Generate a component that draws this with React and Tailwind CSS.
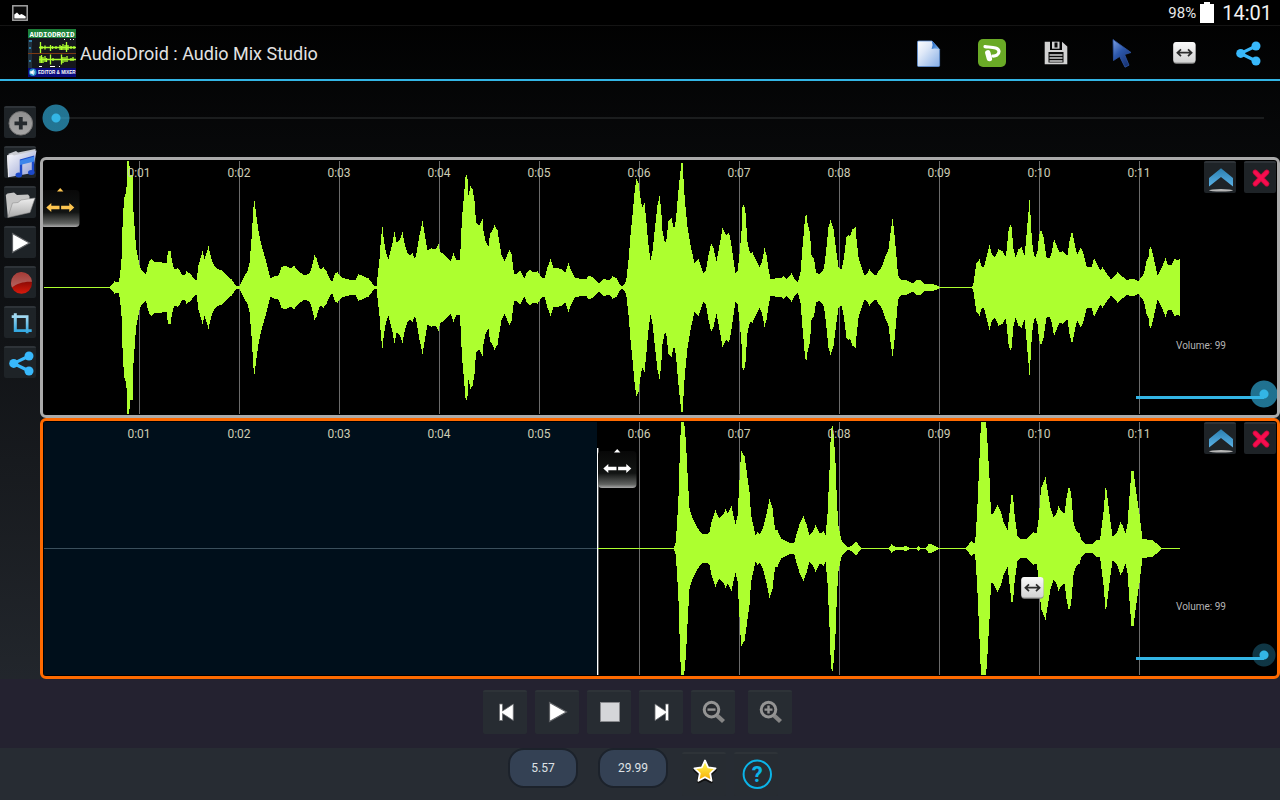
import React, { useState } from "react";

const LIME = "#adff2f";
const SECOND = 100;
const ORIGIN = 43;

/* Envelope points: x position and half height of the wave, in pairs. */
const VOICE = [
  44,.5,110,.5,112,3,114.5,6,118.5,5,120,12,121.5,28,122.5,60,124,89,125.5,93,126.5,100,127.5,126,128.5,126,129.5,121,130.5,112,132.5,112,133.5,75,135,55,136,40,137.5,32,139.5,22,140.5,19,143.5,15,146,13,147.5,20,149.5,26,151.5,28,155,25,161.5,25,166.5,24,168,36,170.5,36,172,26,174,18,177.5,19,179,18,181.5,13,185,12,186.5,16,190,14,194.5,8,196.5,7,198.5,22,202.5,36,204.5,28,208.5,41,210.5,32,213,24,216.5,19,221.5,17,226.5,12,231.5,8,235,3,237,1,239.5,1,241.5,5,245,13,247.5,16,249.5,24,251.5,48,253.5,80,254.5,86,255.5,78,258.5,56,261.5,42,265,30,268.5,16,270.5,9,274,11,278.5,12,281.5,20,285,22,288.5,20,291.5,19,294,22,296.5,18,300,15,305,12,309.5,14,311.5,19,314.5,32,316.5,29,320,18,323.5,20,326.5,16,330,8,332.5,6,335,14,337.5,15,341.5,10,348.5,8,355,7,358.5,13,361.5,12,368.5,9,371.5,5,375,1,376.5,1,377.5,10,379.5,28,381,50,382.5,60,384,46,386,35,388.5,28,390.5,36,392.5,44,394.3,56,396.5,45,400,48,402.5,55,405,42,407.5,34,410.5,32,412.5,34,415,28,416.5,34,419.5,52,422.5,66,424.5,54,427.5,37,431.5,39,436,38,438.5,43,440,36,444,33,448.5,28,450.5,26,453.5,34,456.5,27,459.5,27,460.5,38,462,70,464,92,465.5,110,466.5,112,467.5,108,468.5,92,470.5,101,472.5,98,474.5,86,476,65,479.5,62,482.5,68,483.5,56,485.5,46,488.5,41,490,54,492.5,57,494.5,62,497.5,57,499.5,44,501.5,32,504.5,26,507.5,33,509.5,37,511.5,33,514,14,516.5,13,520,17,524.5,9,526.5,14,530,18,533.5,15,537.5,16,541.5,10,544.5,9,547.5,20,550.5,28,553.5,19,558.5,19,561.5,18,565.5,15,568.5,24,571.5,16,574.5,10,578.5,9,586,8,589,12,592.5,10,598.5,4,604,9,607.5,7,610,8,612.5,11,616.5,9,620,3,622.5,1,625,4,626.5,9,628.5,27,630.5,52,632.5,72,635,100,636.5,108,638.5,104,640,92,642,80,644.5,84,646,70,648,46,650.5,27,652.5,36,655,60,657.5,82,659.5,91,661,80,662.5,56,665,44,666.5,48,668.5,66,671.5,69,674,58,676,68,678,92,680,112,681.5,124,682.5,124,683.5,108,685,85,687.5,60,690.5,42,694.5,24,698.5,28,700.5,22,703.5,14,706,17,708.5,32,711,44,713.5,39,716.5,26,719.5,42,722.5,59,726,52,729,55,731,45,733.5,27,735.5,14,737.5,16,739.5,33,741.5,56,742.5,80,744,83,745.5,74,747.5,45,750,34,752.5,35,755.5,28,759.5,20,762,26,764.5,39,766.5,32,768.5,18,770.5,8,775,9,780,9,783.5,11,786.5,8,791.5,14,794.5,8,798,5,800.5,15,802.5,40,804.5,63,806,76,807.5,64,810,54,811.5,32,814,29,816,15,819.5,13,821.5,15,824,19,826,36,828.5,60,830.5,67,833.5,58,836,38,838.5,20,841.5,18,844,30,846.5,50,848.5,52,850,51,852.5,58,855.5,60,856.5,48,858.5,30,861.5,20,864.5,12,866.5,13,869.5,18,872.5,14,876,12,878.5,16,881.5,20,885,30,888.5,38,890.5,54,892.5,68,894,58,896,36,898,12,900.5,8,906.5,7,913.5,4,916.5,7,921,7,923.5,4,928.5,3,931,4,936.5,2,940,.5,972,.5,973.5,4,975,15,976.5,24,979.5,28,981.5,21,984,20,986,28,989.5,42,991.5,34,995,30,998.5,38,1002.5,36,1005.5,31,1006.5,36,1008.5,56,1010,63,1011.5,60,1013.5,38,1015.5,30,1018.5,38,1021.5,40,1024.5,32,1026,46,1027.5,64,1029.5,87,1030.5,72,1032,46,1034,32,1035.5,30,1037.5,36,1039,52,1041,58,1043.5,50,1046.5,30,1049.5,29,1052,36,1054,49,1056.5,42,1059.5,35,1062.5,36,1067.5,32,1069.5,46,1072,57,1074.5,44,1077,33,1081,40,1084,32,1086.5,21,1091.5,20,1094,29,1096.5,24,1100,17,1102.5,20,1106.5,14,1111,8,1117.5,15,1123.5,10,1127.5,7,1131,9,1135,8,1138.5,6,1140.5,9,1144,14,1146.5,26,1148.5,30,1150,42,1151.5,38,1154,28,1157.5,12,1160,16,1165.5,29,1168,22,1171.5,22,1175,29,1177.5,27,1180,29,
];

const EFFECTS = [
  598,.5,674,.5,675.5,5,677,24,678.5,52,679.5,85,681,128,684,128,686,106,687.5,75,689.5,40,692.5,30,696.5,22,701.5,15,706,14,709.5,16,711.5,26,715.5,38,719,30,723.5,34,725.5,39,727.5,35,731.5,42,733.5,32,735.5,24,737.5,32,739,60,740.5,86,741.5,97,744.5,92,746.5,78,749.5,56,751,34,753.5,22,755.5,13,757.5,16,760,14,763.5,22,766.5,34,769.5,49,772.5,40,775,19,777.5,18,781,10,785,8,788.5,6,790.5,5,794,5,796.5,14,799.5,24,803.5,32,806.5,24,809.5,13,812.5,16,815.5,23,820,15,823.5,17,825.5,13,827.5,34,829.5,78,831,120,832.5,122,834,110,835.5,85,837,45,838.5,22,841.5,8,845,4,847.5,1.5,850.5,2,856,7,860.5,1,861.5,.5,888.5,.5,891.5,4,895,2,903.5,1,905,3,910,.5,916.5,.5,918.5,2,920,.5,925.5,.5,928.5,4,930,5,934,3,939.5,.5,965.5,.5,969.5,5,971.5,7,975,5,976,18,977.5,44,979.5,90,981,128,986,128,987.5,105,989.5,70,991,34,993.5,35,997.5,43,1001,36,1004,25,1007.5,18,1009,31,1011.5,53,1013,53,1014.5,34,1017.5,12,1021.5,9,1026.5,9,1030,13,1033.5,16,1036.5,15,1038.5,28,1041,60,1045.5,71,1048.5,52,1050.5,40,1053.5,31,1056,34,1058.5,42,1061.5,37,1064.5,35,1066.5,50,1068.5,60,1070,61,1071.5,50,1073.5,26,1076,18,1079.5,15,1081.5,8,1085.5,4,1092.5,4,1096.5,8,1100,8,1101.5,20,1103.5,36,1105.5,60,1106.5,58,1109.5,34,1112.5,12,1116.5,15,1120.5,26,1122.5,23,1125.5,15,1127.5,24,1130,60,1131.5,77,1133.5,77,1136,58,1139.5,34,1142.5,9,1146.5,9,1152.5,8,1156.5,5,1160.5,1,1161.5,.5,1180,.5,
];

const MID = 126.5;

/* One column per pixel, mirrored round the centre line. */
function wavePath(points) {
  let d = "";
  let k = 0;
  const last = points[points.length - 2];
  for (let x = Math.ceil(points[0]); x < last; x++) {
    while (k + 3 < points.length - 2 && points[k + 2] < x + 0.5) k += 2;
    const x0 = points[k], a0 = points[k + 1], x1 = points[k + 2], a1 = points[k + 3];
    const t = Math.min(1, Math.max(0, (x + 0.5 - x0) / (x1 - x0)));
    const amp = Math.round(a0 + (a1 - a0) * t - 0.5) + 0.5;
    d += `M${x - ORIGIN} ${MID - amp}h1v${amp * 2}h-1z`;
  }
  return d;
}

const WAVES = { voice: wavePath(VOICE), effects: wavePath(EFFECTS) };
const SECONDS = [1, 2, 3, 4, 5, 6, 7, 8, 9, 10, 11];

function Svg({ size = 32, children }) {
  return (
    <svg width={size} height={size} viewBox={`0 0 ${size} ${size}`} className="block shrink-0 overflow-visible" aria-hidden="true">
      {children}
    </svg>
  );
}

function ShareIcon({ dx = 0, dy = 0 }) {
  return (
    <Svg>
      <g transform={`translate(${dx} ${dy})`} fill="#38b8fb" stroke="#38b8fb">
        <path d="M24 9 8.7 16.4 24 24" fill="none" strokeWidth="3.2" />
        <circle cx="24" cy="9" r="4.5" stroke="none" />
        <circle cx="8.7" cy="16.4" r="4.5" stroke="none" />
        <circle cx="24" cy="24" r="4.5" stroke="none" />
      </g>
    </Svg>
  );
}

function MoveBox() {
  return (
    <Svg>
      <defs>
        <linearGradient id="moveBox" x1="0" y1="0" x2="0" y2="1">
          <stop offset="0" stopColor="#fafafa" />
          <stop offset="1" stopColor="#d2d2d2" />
        </linearGradient>
      </defs>
      <rect x="5.3" y="5.3" width="22.2" height="21.4" rx="3" fill="#8e8e8e" />
      <rect x="5.3" y="5" width="22.2" height="20.4" rx="3" fill="url(#moveBox)" />
      <path d="M10 15.7h13M13 12.3l-3.6 3.4 3.6 3.4M20 12.3l3.6 3.4-3.6 3.4" fill="none" stroke="#2b2b2b" strokeWidth="1.7" />
    </Svg>
  );
}

const FileIcon = () => (
  <Svg>
    <defs>
      <linearGradient id="page" x1="0" y1="0" x2="1" y2="1">
        <stop offset="0" stopColor="#ffffff" />
        <stop offset="0.35" stopColor="#dfe9f8" />
        <stop offset="1" stopColor="#86aee6" />
      </linearGradient>
      <linearGradient id="fold" x1="0" y1="0" x2="1" y2="1">
        <stop offset="0.2" stopColor="#1d66c4" />
        <stop offset="1" stopColor="#8ec0f2" />
      </linearGradient>
    </defs>
    <path d="M6.5 4H20l7.6 8.4V28.5q0 1-1 1H6.5q-1 0-1-1V5q0-1 1-1z" fill="url(#page)" stroke="#5f92d8" strokeWidth="0.8" />
    <path d="M20 4l7.6 8.4Q23 11 19.6 12 21.5 8 20 4z" fill="url(#fold)" />
  </Svg>
);

const PinIcon = () => (
  <Svg>
    <rect x="2" y="2" width="28" height="28" rx="5" fill="#6aaa26" />
    <path d="M9 9.6C13 10.4 23 9.6 23 14.6 23 18 19.5 19.2 16.8 19" fill="none" stroke="#fff" strokeWidth="3.2" strokeLinecap="round" />
    <path d="M11.8 15.8 13.4 21.6" stroke="#fff" strokeWidth="5.4" strokeLinecap="round" />
  </Svg>
);

const SaveIcon = () => (
  <Svg>
    <path d="M4.7 4.7h5.3v8.3h12V4.7L27.3 9.5v17.8H4.7z" fill="#d2d2d2" />
    <path d="M12 4.7h7.5v7H12z" fill="#d2d2d2" />
    <path d="M14.5 5.5h3v5h-3z" fill="#0a0a0a" />
    <path d="M8.5 15h15v10.5h-15z" fill="#0a0a0a" />
    <path d="M9.5 18h13M9.5 21h13M9.5 24h13" stroke="#d2d2d2" strokeWidth="1.3" />
  </Svg>
);

const CursorIcon = () => (
  <Svg>
    <defs>
      <linearGradient id="cursor" x1="0" y1="0" x2="0.6" y2="1">
        <stop offset="0" stopColor="#7da0e4" />
        <stop offset="0.5" stopColor="#2c57ab" />
        <stop offset="1" stopColor="#1a3678" />
      </linearGradient>
    </defs>
    <path d="M9 2.5 27 15.5 20.6 17.5 25 28.2 21 30.2 15.6 19.5 9.5 23.5z" fill="url(#cursor)" stroke="#2f55a5" strokeWidth="0.8" />
  </Svg>
);

const PlusIcon = () => (
  <Svg>
    <defs>
      <linearGradient id="plus" x1="0" y1="0" x2="0" y2="1">
        <stop offset="0" stopColor="#8f8f8f" />
        <stop offset="1" stopColor="#a6a6a6" />
      </linearGradient>
    </defs>
    <circle cx="16.8" cy="17.3" r="11.8" fill="url(#plus)" stroke="#707070" />
    <path d="M16.8 11v12.6M10.5 17.3h12.6" stroke="#252a2e" strokeWidth="3.8" />
  </Svg>
);

const MusicFolderIcon = () => (
  <Svg>
    <defs>
      <linearGradient id="musicFolder" x1="0" y1="0" x2="1" y2="1">
        <stop offset="0" stopColor="#ffffff" />
        <stop offset="1" stopColor="#8f9ad0" />
      </linearGradient>
    </defs>
    <path d="M4 8 12 5l2 1.5L31.5 3v4L8 12z" fill="#c9cbd2" />
    <path d="M3 9.5 8 8.5 10 9.5 32.5 4.5 28.5 27 4.5 31.3z" fill="url(#musicFolder)" />
    <path d="M3 9.5 5 9v22l-1 .3z" fill="#e8e8ee" />
    <path d="M17 29V14.5L29 11v15.5" fill="none" stroke="#1c49c9" strokeWidth="2.4" />
    <path d="M16 14.5 30.2 10.5v5L16 19z" fill="#3d86ea" />
    <ellipse cx="14.8" cy="29" rx="3.3" ry="2.5" fill="#1c49c9" />
    <ellipse cx="27.3" cy="26.5" rx="3.3" ry="2.5" fill="#1c49c9" />
  </Svg>
);

const FolderIcon = () => (
  <Svg>
    <defs>
      <linearGradient id="folder" x1="0" y1="0" x2="0" y2="1">
        <stop offset="0" stopColor="#efefef" />
        <stop offset="1" stopColor="#a9a9a9" />
      </linearGradient>
    </defs>
    <path d="M1.8 9 3.5 7.5 10 6.5 13 9 24 8.5l1.5 1.8V26L3.8 31z" fill="#c4c4c4" />
    <path d="M3.8 31.5 8.5 17 14 16.5 17 14 31 12 26 26.5z" fill="url(#folder)" stroke="#8f8f8f" strokeWidth="0.6" />
  </Svg>
);

const SmallPlayIcon = () => (
  <Svg>
    <path d="M8.5 7.5v19L25.5 17z" fill="#fff" stroke="#5a5d60" strokeWidth="1.2" />
  </Svg>
);

const RecordIcon = () => (
  <Svg>
    <defs>
      <linearGradient id="record" x1="0" y1="0" x2="0" y2="1">
        <stop offset="0.3" stopColor="#7c0703" />
        <stop offset="1" stopColor="#d81a0c" />
      </linearGradient>
      <linearGradient id="gloss" x1="0" y1="0" x2="0" y2="1">
        <stop offset="0" stopColor="#a53a35" />
        <stop offset="1" stopColor="#b26561" />
      </linearGradient>
    </defs>
    <circle cx="17.5" cy="17.3" r="10.5" fill="url(#record)" />
    <path d="M7 17.3a10.5 10.500 0 0 1 21-1.5C22 15 13 17 8 21.5A10 10 0 0 1 7 17.3z" fill="url(#gloss)" />
  </Svg>
);

const CropIcon = () => (
  <Svg>
    <defs>
      <linearGradient id="crop" x1="0" y1="0" x2="0" y2="1">
        <stop offset="0" stopColor="#a9dcf3" />
        <stop offset="1" stopColor="#2fa6e0" />
      </linearGradient>
    </defs>
    <path d="M9.8 7.3h3v16h14.9v2.7H9.8z" fill="url(#crop)" />
    <path d="M7.7 9.3h16.8v18h-2.7V12H7.700z" fill="url(#crop)" />
  </Svg>
);

const CollapseIcon = () => (
  <Svg>
    <defs>
      <linearGradient id="collapse" x1="0" y1="0" x2="0" y2="1">
        <stop offset="0" stopColor="#2b7fb0" />
        <stop offset="1" stopColor="#5bb2e6" />
      </linearGradient>
    </defs>
    <path d="M17 7.3 29 17v8.5L17 16 5 25.5V17z" fill="url(#collapse)" />
    <ellipse cx="17" cy="29.3" rx="12" ry="1.2" fill="#b5b5b5" />
  </Svg>
);

const CloseIcon = () => (
  <Svg>
    <path d="M11.2 11.2 22.8 22.8M22.8 11.2 11.2 22.8" stroke="#d00a3c" strokeWidth="5.2" strokeLinecap="round" />
    <path d="M11.2 11.2 22.8 22.8M22.8 11.2 11.2 22.8" stroke="#f60d50" strokeWidth="3.4" strokeLinecap="round" />
  </Svg>
);

function Magnifier({ plus }) {
  return (
    <Svg size={44}>
      <path d="M26 25.5 32.5 31.5" stroke="#858585" strokeWidth="4.4" />
      <circle cx="20.500" cy="19.6" r="7.3" fill="#26292e" stroke="#949494" strokeWidth="3" />
      <path d={plus ? "M16.5 19.6h8M20.5 15.6v8" : "M16.5 19.6h8"} stroke="#949494" strokeWidth="2.4" />
    </Svg>
  );
}

function AppLogo() {
  return (
    <Svg size={48}>
      <rect width="48" height="48" fill="#15171c" />
      <rect width="48" height="9" fill="#1c7f38" />
      <text x="24" y="7.5" textAnchor="middle" fill="#fff" fontSize="7.5" fontWeight="700" fontFamily="'Liberation Mono', monospace">AUDIODROID</text>
      <rect y="11" width="4" height="28" fill="#20303c" />
      <path d="M1 12h3M1 19h2M1 32h2" stroke="#2f7ea8" strokeWidth="2" />
      <path d="M36 10.5h1M42 10.5h1M45 10.5h1M11 37.5h3M22 37.5h5M31 37.5h1" stroke="#fff" />
      <path d="M0 24.5h48" stroke="#7c3a12" />
      <path
        d="M11 18.500h37M12.5 13v11M14 17v3M17 16.5v4M22.5 16v6M24.5 17v3M28 17v3M32 16v5M33.5 17v4M35 15v6M37 16v5M38.5 13v10M40 16v5M43 17v3M46 17v3"
        stroke={LIME}
        strokeWidth="1.3"
      />
      <path
        d="M11 30.5h37M12 27v7M13.5 26v8M15 28v6M17 27v6M18.5 29v4M22.5 25.5v10M25 29v3M33.5 25.5v10M35 28v6M37 28v5M39 27v6M43 29v3M45 28v4"
        stroke={LIME}
        strokeWidth="1.3"
      />
      <rect y="39" width="48" height="9" fill="#0a0a7c" />
      <circle cx="4.8" cy="43.3" r="3.8" fill="#2389c4" />
      <path d="M2.5 42.2h1.4l1.6-1.4v5l-1.6-1.4H2.5zM6.6 41.8v3" fill="#fff" stroke="#fff" strokeWidth="0.5" />
      <text x="10" y="45.3" fill="#fff" fontSize="4.6" fontWeight="700" fontFamily="'Liberation Sans', sans-serif">EDITOR &amp; MIXER</text>
    </Svg>
  );
}

function IconButton({ label, big, className = "", children }) {
  return (
    <button
      type="button"
      aria-label={label}
      className={`shrink-0 rounded-xs border-t-2 border-[#2e3338] ${big ? "size-11 bg-[#272c32]" : "size-8 bg-[#1e2327]"} ${className}`}
    >
      <span className="-mt-0.5 block">{children}</span>
    </button>
  );
}

function Handle({ label, color, id }) {
  return (
    <button type="button" aria-label={label} className="block">
      <svg width="39" height="39" viewBox="0 0 39 39" className="block" aria-hidden="true">
        <defs>
          <linearGradient id={id} x1="0" y1="0" x2="0" y2="1">
            <stop offset="0" stopColor="#080808" />
            <stop offset="0.6" stopColor="#121413" />
            <stop offset="0.9" stopColor="#606260" />
            <stop offset="1" stopColor="#a8a8a8" />
          </linearGradient>
        </defs>
        <rect x="0" y="2" width="38.5" height="37" rx="4" fill={`url(#${id})`} />
        <path d="M16 3.5 19.2 0l3.2 3.5z" fill={color} />
        <path
          d="M5.3 19.5l5-4.6v2.8h8.2v3.6h-8.2v2.8zM33.3 19.5l-5-4.6v2.8h-8.2v3.6h8.2v2.8z"
          fill={color}
        />
      </svg>
    </button>
  );
}

const thumbBase =
  "[&::-webkit-slider-thumb]:appearance-none [&::-webkit-slider-thumb]:size-7 [&::-webkit-slider-thumb]:rounded-full";
const thumbBright =
  "[&::-webkit-slider-thumb]:bg-[radial-gradient(circle,#33b5e5_0_4px,#33b5e5a0_5px_13px,transparent_14px)]";
const thumbDim =
  "[&::-webkit-slider-thumb]:bg-[radial-gradient(circle,#33b5e5_0_4px,#33b5e54c_5px_11px,transparent_12px)]";

function Track({ name, id, wave, active, handleLeft, handleColor, dimThumb, children }) {
  const [volume, setVolume] = useState(99);
  return (
    <section
      aria-label={name}
      className={`relative flex min-h-[261px] flex-1 items-center overflow-hidden rounded-md border-3 bg-black ${active ? "border-[#ff6a00]" : "border-[#ababab]"}`}
    >
      {active && <div className="absolute inset-y-px left-px w-[553px] bg-[#000f1b]" />}
      <svg className="relative block h-[253px] w-full" shapeRendering="crispEdges" aria-hidden="true">
        {SECONDS.filter((s) => !active || s > 5).map((s) => (
          <rect key={s} x={s * SECOND - 4} y="0" width="1" height="253" fill="#6b6b6b" />
        ))}
        {active && <rect x="1" y="126" width="553" height="1" fill="#3b4f5c" />}
        {active && <rect x="554" y="26" width="1" height="227" fill="#ffffff" />}
        {active && <rect x="555" y="26" width="1" height="227" fill="#5c5c5c" />}
        <path d={wave} fill={LIME} />
      </svg>
      {SECONDS.map((s) => (
        <span
          key={s}
          className="absolute top-[5px] w-12 -translate-x-1/2 text-center text-xs leading-4 text-[#cdcdb4]"
          style={{ left: s * SECOND - 4 }}
        >
          0:{String(s).padStart(2, "0")}
        </span>
      ))}
      <div className="absolute top-7" style={{ left: handleLeft }}>
        <Handle label={`Move ${name}`} color={handleColor} id={`${id}-handle`} />
      </div>
      <div className="absolute top-px right-px flex gap-2">
        <IconButton label={`Collapse ${name}`}><CollapseIcon /></IconButton>
        <IconButton label={`Remove ${name}`}><CloseIcon /></IconButton>
      </div>
      <label htmlFor={`${id}-volume`} className="absolute right-[51px] bottom-[61px] text-[10px] leading-4 text-[#b4b4b4]">
        Volume: {volume}
      </label>
      <input
        id={`${id}-volume`}
        type="range"
        min="0"
        max="99"
        value={volume}
        onChange={(e) => setVolume(Number(e.target.value))}
        className={`absolute -right-px bottom-[7px] h-7 w-[156px] appearance-none bg-[linear-gradient(to_right,transparent_14px,#33b5e5_14px_calc(100%-14px),transparent_calc(100%-14px))] bg-[length:100%_3px] bg-[position:0_16px] bg-no-repeat outline-none ${thumbBase} ${dimThumb ? thumbDim : thumbBright}`}
      />
      {children}
    </section>
  );
}

const ACTIONS = [
  ["New project", FileIcon],
  ["Get the full version", PinIcon],
  ["Save", SaveIcon],
  ["Select", CursorIcon],
  ["Move", MoveBox],
  ["Share", ShareIcon],
];

export default function App() {
  const [position, setPosition] = useState(0);
  const [start, setStart] = useState("5.57");
  const [end, setEnd] = useState("29.99");
  const field =
    "h-10 w-[70px] rounded-2xl border-2 border-[#1c222b] bg-[#344154] text-center text-xs text-[#dfe2e6] outline-none";

  return (
    <div className="flex min-h-screen flex-col bg-linear-to-b/srgb from-black to-[#282d34] font-[Roboto,sans-serif] text-white">
      <div className="flex h-[26px] items-center justify-between border-b border-[#141414] bg-black pr-2 pl-3">
        <Svg size={16}>
          <rect x="0.8" y="0.8" width="14.4" height="14.4" fill="#0a0a0a" stroke="#a2a2a2" strokeWidth="1.5" />
          <path d="M2.3 13.5V9.5L5 7.5 7.5 10l2-1 1.5.8 2.7 1.700v2z" fill="#fff" />
        </Svg>
        <div className="flex items-center gap-1">
          <span className="text-[15px] leading-6 text-[#e8e8e8]">98%</span>
          <svg width="14" height="21" viewBox="0 0 14 21" className="block" aria-hidden="true">
            <path d="M4 0h6v2h4v19H0V2h4z" fill="#fff" />
          </svg>
          <span className="pl-1 text-xl leading-6 text-[#f2f2f2]">14:01</span>
        </div>
      </div>

      <header className="flex h-[55px] items-start justify-between border-b-2 border-[#33b5e5] pl-7">
        <div className="flex items-center gap-1 pt-[3px]">
          <AppLogo />
          <h1 className="pt-0.5 text-lg leading-6 text-[#e2e2e2]">AudioDroid : Audio Mix Studio</h1>
        </div>
        <nav className="flex" aria-label="Project">
          {ACTIONS.map(([label, Icon]) => (
            <button key={label} type="button" aria-label={label} className="flex w-16 justify-center pt-[11px] pb-2.5">
              <Icon />
            </button>
          ))}
        </nav>
      </header>

      <main className="flex flex-1">
        <aside className="flex w-10 shrink-0 flex-col items-center gap-2 pt-[25px]">
          <IconButton label="Add track"><PlusIcon /></IconButton>
          <IconButton label="Add music"><MusicFolderIcon /></IconButton>
          <IconButton label="Open project"><FolderIcon /></IconButton>
          <IconButton label="Play selection"><SmallPlayIcon /></IconButton>
          <IconButton label="Record"><RecordIcon /></IconButton>
          <IconButton label="Crop"><CropIcon /></IconButton>
          <IconButton label="Share track"><ShareIcon dx={1} dy={1} /></IconButton>
        </aside>
        <div className="flex min-w-0 flex-1 flex-col">
          <div className="flex px-0.5 pt-[23px] pb-[25px]">
            <input
              type="range"
              aria-label="Position"
              min="0"
              max="100"
              value={position}
              onChange={(e) => setPosition(Number(e.target.value))}
              className={`h-7 w-full appearance-none bg-[linear-gradient(to_right,transparent_14px,#1b1d1e_14px_calc(100%-14px),transparent_calc(100%-14px))] bg-[length:100%_2px] bg-center bg-no-repeat outline-none ${thumbBase} ${thumbBright}`}
            />
          </div>
          <Track name="Track 1" id="track-1" wave={WAVES.voice} handleLeft={-2} handleColor="#fdc550" />
          <Track name="Track 2" id="track-2" wave={WAVES.effects} active dimThumb handleLeft={555} handleColor="#ffffff">
            <div className="absolute top-[151px] left-[973px]"><MoveBox /></div>
          </Track>
        </div>
      </main>

      <div className="flex h-[69px] shrink-0 justify-center gap-2 bg-[#242230] pt-[11px] pr-[5px]">
        <IconButton big label="Previous">
          <Svg size={44}>
            <path d="M16.5 14h3v7l10.800-7v16.5L19.500 23.500v7h-3z" fill="#fff" stroke="#6a6c70" strokeWidth="0.8" />
          </Svg>
        </IconButton>
        <IconButton big label="Play">
          <Svg size={44}>
            <path d="M14.5 12.5v19L31.5 22z" fill="#fff" stroke="#5f6266" strokeWidth="1.2" />
          </Svg>
        </IconButton>
        <IconButton big label="Stop">
          <Svg size={44}>
            <rect x="13.5" y="12.5" width="19" height="19" fill="#d5d6d9" stroke="#8a8c90" strokeWidth="0.8" />
          </Svg>
        </IconButton>
        <IconButton big label="Next">
          <Svg size={44}>
            <path d="M29.5 14h-3v7L16 14v16.5l10.5-7v7h3z" fill="#fff" stroke="#6a6c70" strokeWidth="0.8" />
          </Svg>
        </IconButton>
        <IconButton big label="Zoom out"><Magnifier /></IconButton>
        <IconButton big label="Zoom in" className="ml-[5px]"><Magnifier plus /></IconButton>
      </div>

      <footer className="flex h-[52px] shrink-0 items-start justify-center bg-[#272c33] pl-[6px]">
        <input aria-label="Start" value={start} onChange={(e) => setStart(e.target.value)} className={field} />
        <input aria-label="End" value={end} onChange={(e) => setEnd(e.target.value)} className={`${field} ml-5`} />
        <div className="ml-3.5 flex gap-2 pt-1">
          <IconButton big label="Favourite">
            <Svg size={44}>
              <defs>
                <linearGradient id="star" x1="0" y1="0" x2="0" y2="1">
                  <stop offset="0.2" stopColor="#fff04a" />
                  <stop offset="1" stopColor="#f5a800" />
                </linearGradient>
              </defs>
              <path d="M23 10.5l3 6.3 6.8.9-5 4.7 1.3 6.8-6.1-3.3-6.1 3.3 1.3-6.8-5-4.7 6.8-.9z" fill="#111" stroke="#111" strokeWidth="4" strokeLinejoin="round" />
              <path d="M23 8.500l3.200 6.800 7.400 1-5.400 5.100 1.400 7.400-6.600-3.600-6.600 3.600 1.400-7.400-5.400-5.100 7.400-1z" fill="url(#star)" stroke="#fff" strokeWidth="1.8" strokeLinejoin="round" />
            </Svg>
          </IconButton>
          <IconButton big label="Help">
            <Svg size={44}>
              <circle cx="23.3" cy="22.3" r="13.7" fill="none" stroke="#0bb4e8" strokeWidth="2" />
              <text x="23.3" y="30" textAnchor="middle" fill="#0bb4e8" fontSize="22" fontWeight="700" fontFamily="Roboto, sans-serif">?</text>
            </Svg>
          </IconButton>
        </div>
      </footer>
    </div>
  );
}
